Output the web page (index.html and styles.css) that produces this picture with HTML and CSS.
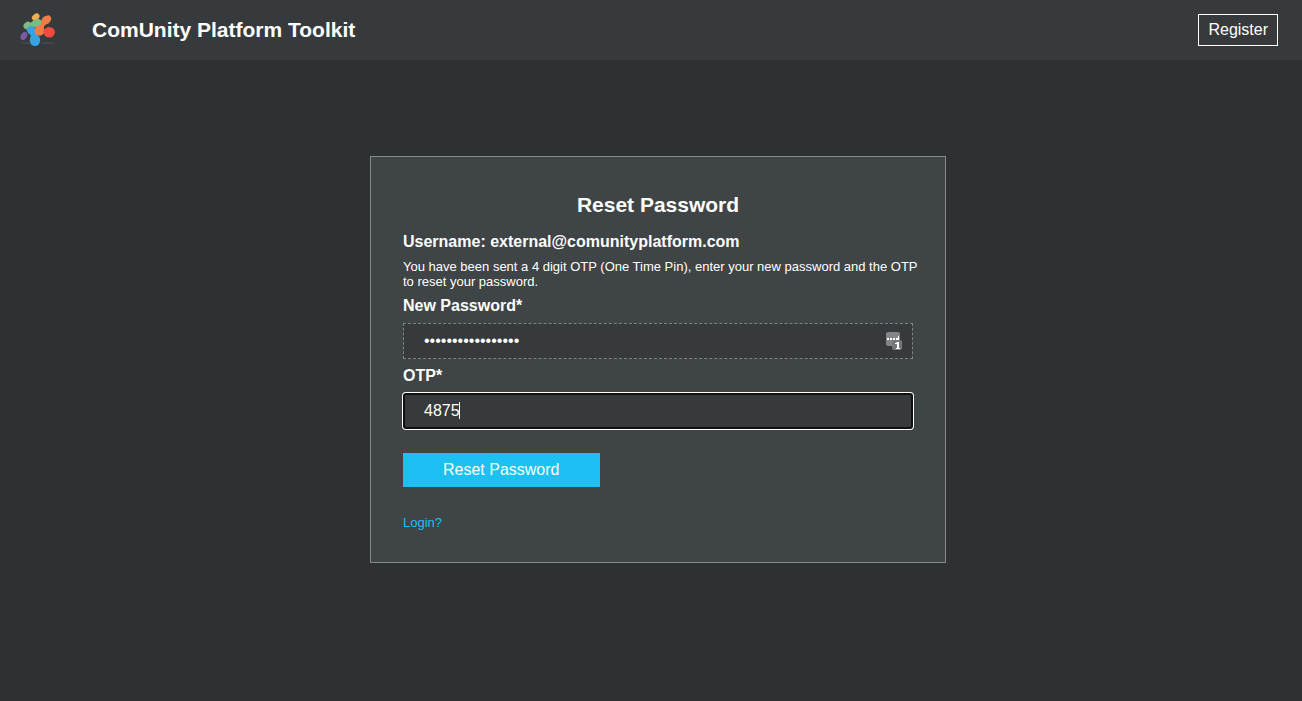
FILE: index.html
```html
<!DOCTYPE html>
<html lang="en">
<head>
<meta charset="utf-8">
<title>ComUnity Platform Toolkit</title>
<link rel="stylesheet" href="styles.css">
</head>
<body>
<header class="topbar">
  <svg class="logo" viewBox="0 0 36 36" aria-hidden="true">
    <ellipse cx="8" cy="31" rx="7" ry="1" fill="#44484a"/>
    <ellipse cx="28" cy="31" rx="7" ry="1" fill="#44484a"/>
    <ellipse cx="15.700" cy="5" rx="4.200" ry="3" transform="rotate(-38 15.700 5)" fill="#f4b04a"/>
    <g fill="#7dbb80">
      <ellipse cx="7.300" cy="13.500" rx="4" ry="3.500" transform="rotate(-35 7.300 13.500)"/>
      <ellipse cx="17" cy="11" rx="5" ry="3.900" transform="rotate(-25 17 11)"/>
      <path d="M8 10.300c2 1 4 0 6-2.500l4 7c-3-.5-6 2-10 2z"/>
    </g>
    <ellipse cx="3.900" cy="24" rx="4.300" ry="3" transform="rotate(-60 3.900 24)" fill="#7a5ba6"/>
    <g fill="#37a3e0">
      <ellipse cx="11.800" cy="18.500" rx="5.200" ry="4.300" transform="rotate(30 11.800 18.500)"/>
      <ellipse cx="15" cy="28.300" rx="5.200" ry="5.800"/>
      <path d="M8 21c3 1 3.300 3 2.200 6h9.600c-1-3-3.500-4-3.500-9z"/>
    </g>
    <g fill="#f27c45">
      <ellipse cx="26.300" cy="8" rx="5.500" ry="4" transform="rotate(-38 26.300 8)"/>
      <ellipse cx="19.500" cy="18.800" rx="5" ry="5"/>
      <path d="M22 9c0 3-2 5-6 6.500l8 3c-1-3 0-6 5.500-8z"/>
    </g>
    <ellipse cx="29.200" cy="20.300" rx="5.700" ry="5.300" fill="#f04b40"/>
  </svg>
  <h1 class="brand">ComUnity Platform Toolkit</h1>
  <button class="register" type="button">Register</button>
</header>
<main class="page">
  <form class="card">
    <h2 class="title">Reset Password</h2>
    <p class="username">Username: external@comunityplatform.com</p>
    <p class="hint">You have been sent a 4 digit OTP (One Time Pin), enter your new password and the OTP to reset your password.</p>
    <label class="label" for="password">New Password*</label>
    <div class="field">
      <input class="input" id="password" type="password" value="abcdefghijklmnopq">
      <svg class="manager" viewBox="0 0 16 18" aria-hidden="true">
        <rect x="0" y="0" width="14" height="14" rx="2" fill="#858585"/>
        <path d="M1 6h2v2H1zM4 6h2v2H4zM7 6h2v2H7zM10 6h2v2h-2zM12 4h1v4h-1z" fill="#fff"/>
        <rect x="6" y="8" width="10" height="10" rx="2" fill="#777"/>
        <path d="M11 10h2v6h1v1h-4v-1h1v-4H9v-1h1z" fill="#fff"/>
      </svg>
    </div>
    <label class="label" for="otp">OTP*</label>
    <div class="field">
      <input class="input focused" id="otp" type="text" value="4875">
      <span class="caret"></span>
    </div>
    <button class="submit" type="button">Reset Password</button>
    <a class="login" href="#">Login?</a>
  </form>
</main>
</body>
</html>
```
FILE: styles.css
```css
* {
  box-sizing: border-box;
}

body {
  margin: 0;
  min-height: 100vh;
  background: #2d3133;
  color: #fff;
  font-family: "Liberation Sans", Arial, sans-serif;
  font-size: 16px;
  line-height: 18px;
}

h1, h2, p {
  margin: 0;
}

.topbar {
  display: flex;
  align-items: center;
  height: 60px;
  padding: 0 24px 0 20px;
  background: #373a3c;
}

.logo {
  width: 36px;
  height: 36px;
  margin-right: 36px;
}

.brand {
  font-size: 21px;
  line-height: 24px;
}

.register {
  height: 32px;
  margin-left: auto;
  padding: 0 9px;
  border: 1px solid #fff;
  background: transparent;
  color: #fff;
  font: inherit;
}

.page {
  display: flex;
  justify-content: center;
  padding: 96px 0 32px 14px;
}

.card {
  display: flex;
  flex-direction: column;
  width: 100%;
  max-width: 576px;
  padding: 36px 32px 32px;
  border: 1px solid #88898b;
  background: #3f4446;
}

.title {
  margin-bottom: 16px;
  font-size: 21px;
  line-height: 24px;
  text-align: center;
}

.username {
  margin-bottom: 8px;
  font-weight: bold;
}

.hint {
  margin: 0 -8px 8px 0;
  font-size: 13px;
  line-height: 15px;
}

.label {
  margin-bottom: 8px;
  font-weight: bold;
}

.field {
  position: relative;
  display: flex;
  margin-bottom: 8px;
}

.input {
  flex: 1;
  min-width: 0;
  height: 36px;
  padding: 0 20px;
  border: 1px dashed #808284;
  outline: none;
  background: #373a3c;
  color: #fff;
  font: inherit;
}

.focused {
  padding: 0 19px;
  border: 2px solid #101010;
  border-radius: 3px;
  box-shadow: 0 0 0 1px #fff;
}

.manager {
  position: absolute;
  top: 9px;
  right: 11px;
  width: 16px;
  height: 18px;
}

.caret {
  position: absolute;
  top: 9px;
  left: 56px;
  width: 1px;
  height: 17px;
  background: #fff;
}

.submit {
  align-self: flex-start;
  height: 34px;
  margin: 16px 0 28px;
  padding: 0 40px;
  border: 0;
  background: #1cc0f3;
  color: #fff;
  font: inherit;
}

.login {
  align-self: flex-start;
  color: #1cc0f3;
  font-size: 13px;
  line-height: 15px;
  text-decoration: none;
}
```
